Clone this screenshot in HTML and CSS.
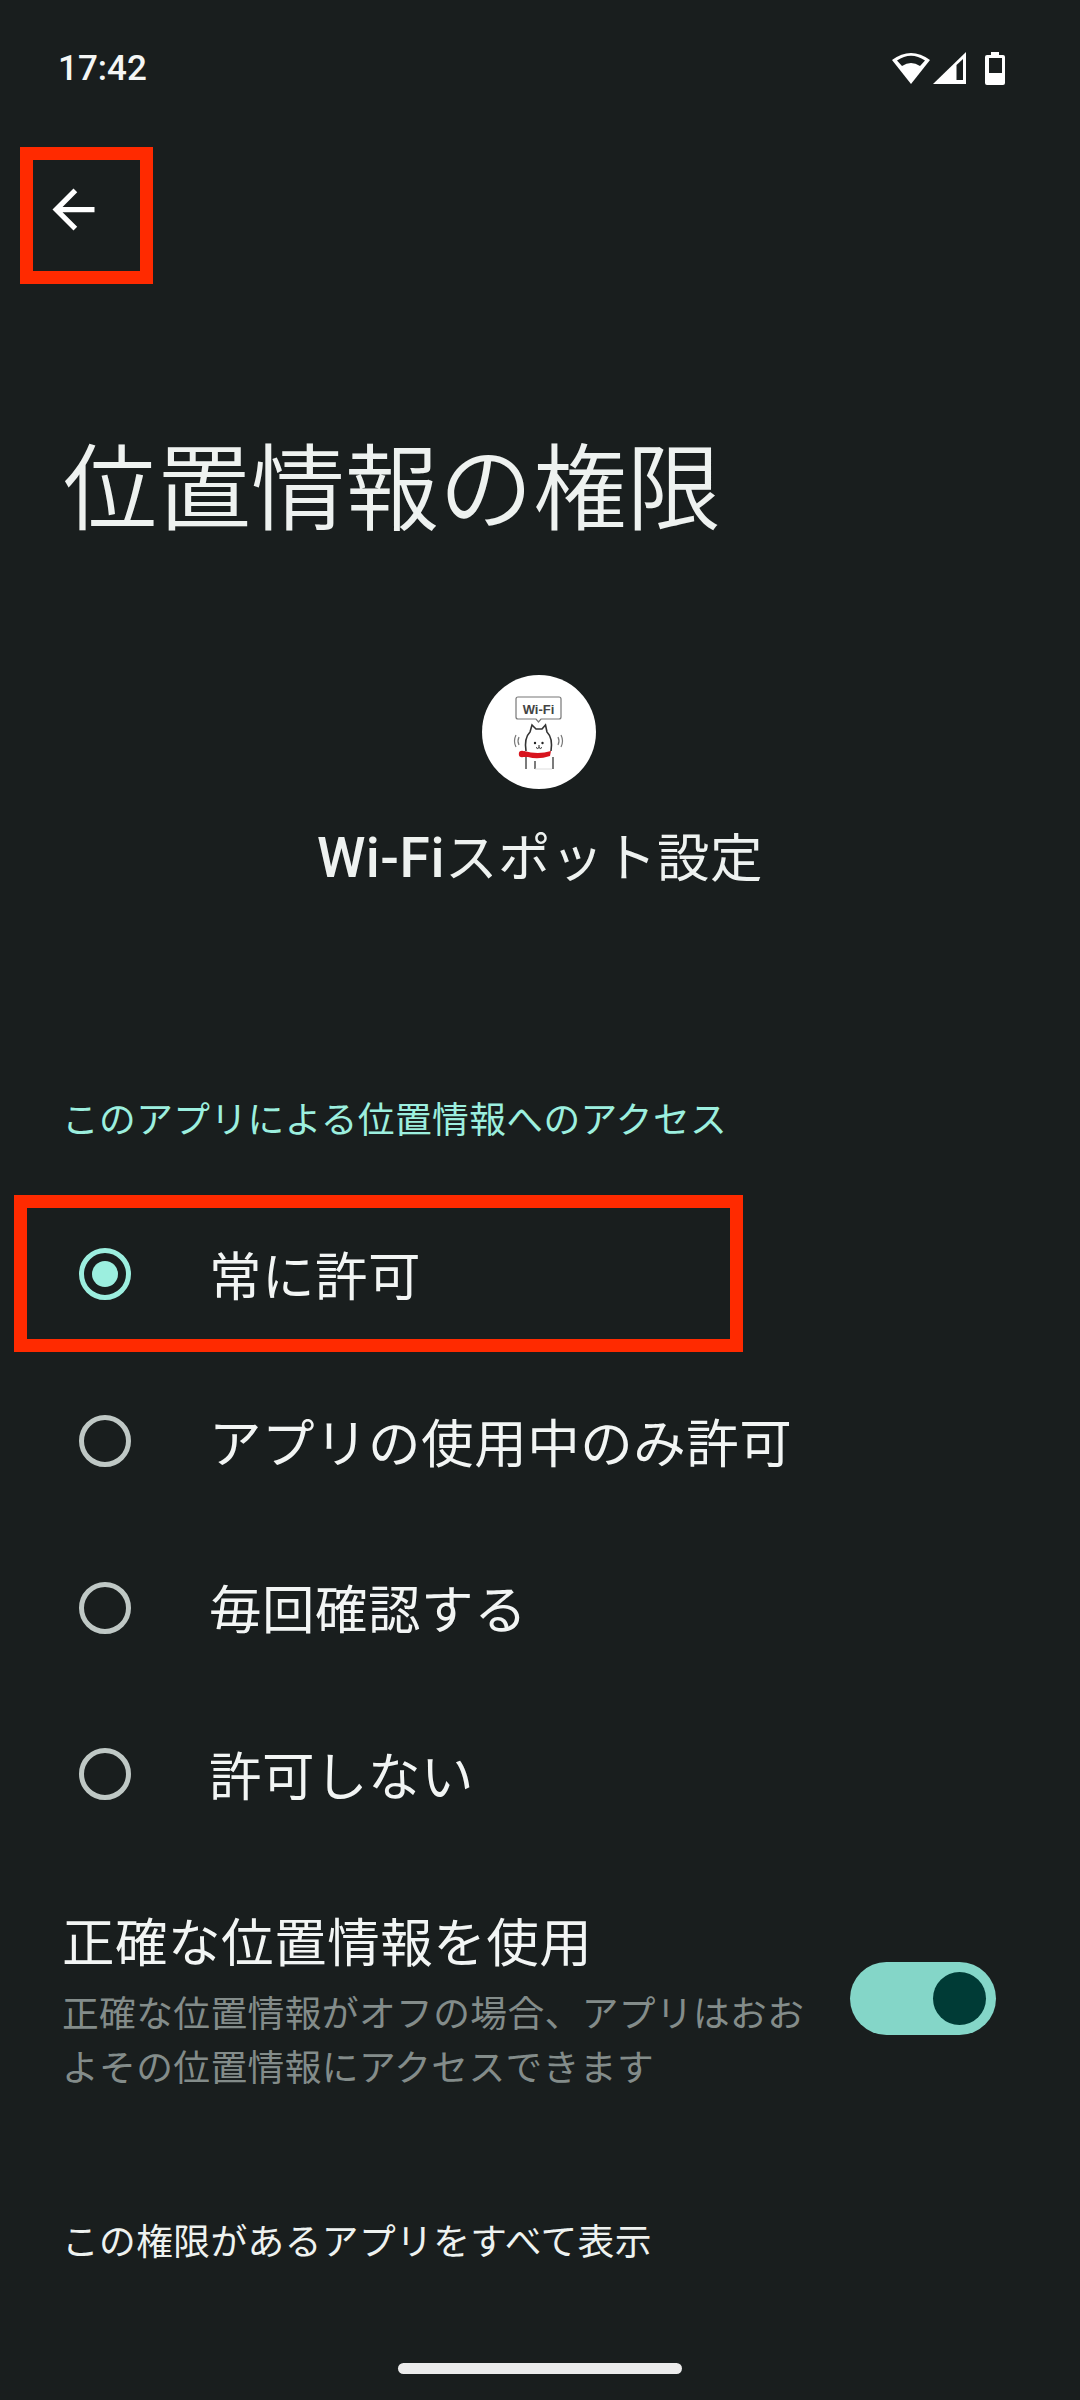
FILE: index.html
```html
<!DOCTYPE html>
<html lang="ja">
<head>
  <meta charset="utf-8">
  <title>位置情報の権限</title>
  <link rel="stylesheet" href="styles.css">
</head>
<body>
  <div class="screen">
    <div class="status-bar">
      <span class="clock">17:42</span>
      <div class="status-icons">
        <svg class="icon-wifi" width="38" height="32" viewBox="0 0 38 32">
          <path d="M0 8Q19 -6 38 8L19 32Z" fill="#fff"/>
          <path d="M5 8.500Q19 -1 33 8.500L28 14Q19 8 10 14Z" fill="#191e1e"/>
        </svg>
        <svg class="icon-signal" width="33" height="32" viewBox="0 0 33 32">
          <path d="M0 32L33 0V32Z" fill="#fff"/>
          <path d="M23.500 13L30 7V28H23.500Z" fill="#191e1e"/>
        </svg>
        <svg class="icon-battery" width="20" height="33" viewBox="0 0 20 33">
          <path d="M6 0H14V3H18Q20 3 20 5V31Q20 33 18 33H2Q0 33 0 31V5Q0 3 2 3H6Z" fill="#fff"/>
          <rect x="4" y="6" width="13" height="15" fill="#191e1e"/>
        </svg>
      </div>
    </div>

    <div class="toolbar">
      <svg class="back-icon" width="63" height="63" viewBox="0 0 24 24">
        <path d="M20 11H7.830l5.590-5.590L12 4l-8 8 8 8 1.410-1.410L7.830 13H20v-2z" fill="#fff"/>
      </svg>
    </div>

    <h1 class="title">位置情報の権限</h1>

    <div class="app-header">
      <svg class="app-logo" width="114" height="114" viewBox="0 0 114 114">
        <circle cx="57" cy="57" r="57" fill="#fff"/>
        <path d="M34 24Q34 22 36 22H77Q79 22 79 24V42Q79 44 77 44H59L56.500 47L54 44H36Q34 44 34 42Z" fill="#fff" stroke="#777" stroke-width="1.200"/>
        <text x="56.500" y="38.500" class="logo-text">Wi-Fi</text>
        <path d="M44 76Q42 63 48 57L50 50L54 54H60L63.500 50L65 57Q71 63 69 76" fill="#fff" stroke="#333" stroke-width="1.600"/>
        <path d="M44 82V94M53 86V94M71 82V94" fill="none" stroke="#444" stroke-width="1.400"/>
        <path d="M53 94H70" stroke="#ddd" stroke-width="1"/>
        <circle cx="53" cy="68" r="1.200" fill="#222"/>
        <circle cx="60.500" cy="68" r="1.200" fill="#222"/>
        <path d="M54 72.500Q56 74.500 57 72.500Q58 74.500 60 72.500M57 70V72.500" fill="none" stroke="#222" stroke-width="1"/>
        <path d="M42 76Q56 80 69 76L68 81Q56 85 46 82L41 82Z" fill="#d8141e"/>
        <circle cx="40" cy="79" r="3.200" fill="#d8141e"/>
        <path d="M37 62Q35 66 37 70M34 60Q31 66 34 72M76 62Q78 66 76 70M79 60Q82 66 79 72" fill="none" stroke="#777" stroke-width="1.200"/>
      </svg>
      <div class="app-name"><span class="app-name-latin">Wi-Fi</span>スポット設定</div>
    </div>

    <div class="section-label">このアプリによる位置情報へのアクセス</div>

    <div class="radio-list">
      <div class="radio-row">
        <span class="radio checked"></span>
        <span class="radio-text">常に許可</span>
      </div>
      <div class="radio-row">
        <span class="radio"></span>
        <span class="radio-text">アプリの使用中のみ許可</span>
      </div>
      <div class="radio-row">
        <span class="radio"></span>
        <span class="radio-text">毎回確認する</span>
      </div>
      <div class="radio-row">
        <span class="radio"></span>
        <span class="radio-text">許可しない</span>
      </div>
    </div>

    <div class="precise-row">
      <div class="precise-text">
        <div class="precise-title">正確な位置情報を使用</div>
        <div class="precise-summary">正確な位置情報がオフの場合、アプリはおおよその位置情報にアクセスできます</div>
      </div>
      <div class="switch"><span class="switch-knob"></span></div>
    </div>

    <div class="all-apps">この権限があるアプリをすべて表示</div>

    <div class="nav-handle"></div>

    <!-- annotation boxes drawn on top of the screenshot -->
    <div class="mark mark-back"></div>
    <div class="mark mark-radio"></div>
  </div>
</body>
</html>
```

FILE: styles.css
```css
* {
  margin: 0;
  padding: 0;
  box-sizing: border-box;
}

body {
  width: 1080px;
  height: 2400px;
  background: #191e1e;
  overflow: hidden;
  font-family: "Noto Sans CJK JP", "Noto Sans", sans-serif;
  color: #eef2f0;
}

.screen {
  position: relative;
  display: flex;
  flex-direction: column;
  width: 1080px;
  height: 2400px;
}

.status-bar {
  display: flex;
  align-items: center;
  justify-content: space-between;
  height: 102px;
  padding: 34px 75px 0 58px;
  flex-shrink: 0;
}

.clock {
  font-family: Roboto, sans-serif;
  font-size: 35px;
  font-weight: 500;
  color: #f4f6f5;
}

.status-icons {
  display: flex;
  align-items: center;
}

.icon-signal {
  margin-left: 3px;
}

.icon-battery {
  margin-left: 19px;
}

.toolbar {
  padding: 76px 0 0 42px;
  flex-shrink: 0;
}

.back-icon {
  display: block;
}

.title {
  margin-top: 186px;
  padding-left: 63px;
  font-size: 94px;
  line-height: 110px;
  font-weight: 350;
  color: #eef2f0;
}

.app-header {
  display: flex;
  flex-direction: column;
  align-items: center;
  margin-top: 138px;
}

.app-logo {
  display: block;
  margin-left: -2px;
}

.logo-text {
  font-family: "Liberation Sans", sans-serif;
  font-size: 13px;
  font-weight: bold;
  fill: #444;
  text-anchor: middle;
}

.app-name {
  margin-top: 35px;
  font-size: 52.500px;
  line-height: 60px;
  letter-spacing: 0.01em;
  color: #eef2f0;
}

.app-name-latin {
  font-family: Roboto, sans-serif;
  font-size: 55px;
  font-weight: 500;
}

.section-label {
  margin-top: 204px;
  padding-left: 62px;
  font-size: 36.750px;
  line-height: 50px;
  letter-spacing: 0.01em;
  color: #9cefdf;
}

.radio-list {
  margin-top: 49px;
}

.radio-row {
  display: flex;
  align-items: center;
  height: 166.700px;
  padding-left: 79px;
}

.radio {
  position: relative;
  width: 52px;
  height: 52px;
  border: 5px solid #bfc8c5;
  border-radius: 50%;
  flex-shrink: 0;
}

.radio.checked {
  border-color: #9cefdf;
}

.radio.checked::after {
  content: "";
  position: absolute;
  top: 8px;
  left: 8px;
  width: 26px;
  height: 26px;
  border-radius: 50%;
  background: #9cefdf;
}

.radio-text {
  margin-left: 78px;
  margin-bottom: 3px;
  font-size: 52.500px;
  line-height: 70px;
  letter-spacing: 0.01em;
  color: #f2f5f4;
}

.precise-row {
  display: flex;
  align-items: center;
  justify-content: space-between;
  margin-top: 47px;
  padding: 0 84px 0 62px;
}

.precise-text {
  width: 748px;
}

.precise-title {
  font-size: 52.500px;
  line-height: 68px;
  letter-spacing: 0.01em;
  color: #f2f5f4;
}

.precise-summary {
  margin-top: 11px;
  font-size: 36.750px;
  line-height: 54.500px;
  letter-spacing: 0.01em;
  color: #838c8a;
}

.switch {
  display: flex;
  align-items: center;
  justify-content: flex-end;
  width: 146px;
  height: 73px;
  padding-right: 10px;
  border-radius: 37px;
  background: #84d6c8;
}

.switch-knob {
  width: 53px;
  height: 53px;
  border-radius: 50%;
  background: #003b36;
}

.all-apps {
  margin-top: 121px;
  padding-left: 62px;
  font-size: 36.750px;
  line-height: 50px;
  letter-spacing: 0.01em;
  color: #eef2f0;
}

.nav-handle {
  position: absolute;
  left: 398px;
  bottom: 26px;
  width: 284px;
  height: 11px;
  border-radius: 6px;
  background: #ebebeb;
}

.mark {
  position: absolute;
  border: 13px solid #ff2a00;
}

.mark-back {
  left: 20px;
  top: 147px;
  width: 133px;
  height: 137px;
}

.mark-radio {
  left: 14px;
  top: 1195px;
  width: 729px;
  height: 157px;
}
```
